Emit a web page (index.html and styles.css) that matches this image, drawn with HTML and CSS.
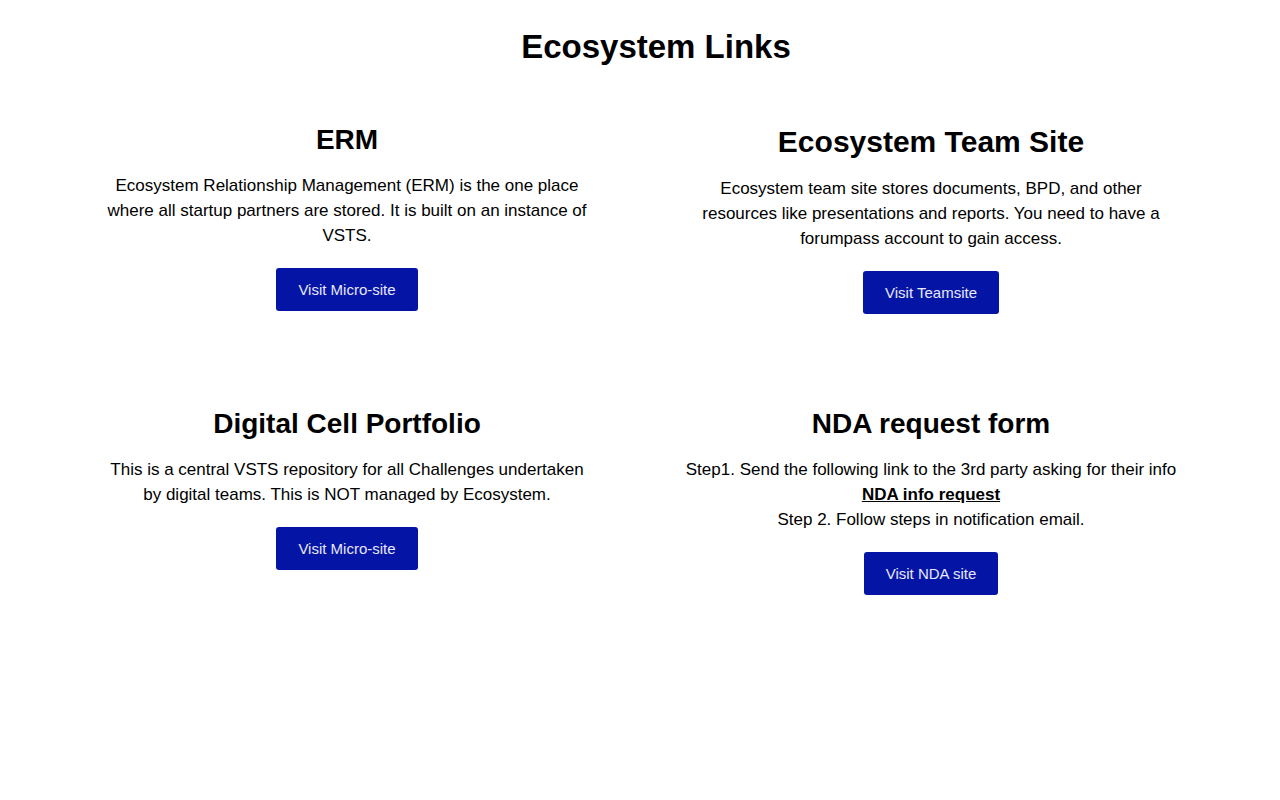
FILE: index.html
```html
<!DOCTYPE html>
<html lang="en">
<head>
  <meta charset="UTF-8">
  <title>Ecosystem Links</title>
  <meta name="viewport" content="width=device-width, initial-scale=1.0">
  <link rel="stylesheet" href="styles.css">
</head>
<body>
  <h1 class="page-title">Ecosystem Links</h1>

  <main class="links-grid">
    <section class="link-card">
      <h2>ERM</h2>
      <p>Ecosystem Relationship Management (ERM) is the one place where all startup partners are stored. It is built on an instance of VSTS.</p>
      <a class="visit-button" href="#">Visit Micro-site</a>
    </section>

    <section class="link-card">
      <h2 class="big-title">Ecosystem Team Site</h2>
      <p>Ecosystem team site stores documents, BPD, and other resources like presentations and reports. You need to have a forumpass account to gain access.</p>
      <a class="visit-button" href="#">Visit Teamsite</a>
    </section>

    <section class="link-card">
      <h2>Digital Cell Portfolio</h2>
      <p>This is a central VSTS repository for all Challenges undertaken by digital teams. This is NOT managed by Ecosystem.</p>
      <a class="visit-button" href="#">Visit Micro-site</a>
    </section>

    <section class="link-card">
      <h2>NDA request form</h2>
      <p>Step1. Send the following link to the 3rd party asking for their info<br>
        <a class="info-link" href="#">NDA info request</a><br>
        Step 2. Follow steps in notification email.</p>
      <a class="visit-button" href="#">Visit NDA site</a>
    </section>
  </main>
</body>
</html>
```

FILE: styles.css
```css
body {
  font-family: "Liberation Sans", Arial, sans-serif;
  background-color: #fff;
  color: #000;
  margin: 0;
  padding: 0;
}
.page-title {
  font-size: 33px;
  line-height: 42px;
  text-align: center;
  margin: 26px 0 0;
  padding-left: 32px;
}
.links-grid {
  display: grid;
  grid-template-columns: 1fr 1fr;
  row-gap: 92px;
  margin: 54px 57px 0 55px;
}
.link-card {
  display: flex;
  flex-direction: column;
  align-items: center;
  text-align: center;
  padding: 0 45px;
}
.link-card h2 {
  font-size: 28px;
  line-height: 36px;
  margin: 0;
}
.link-card h2.big-title {
  font-size: 30px;
  line-height: 39px;
}
.link-card p {
  font-size: 17px;
  line-height: 25px;
  margin: 15px 0 20px;
}
.info-link {
  color: #000;
  font-weight: bold;
}
.visit-button {
  display: block;
  background-color: #0414a4;
  color: #e8e8ff;
  text-decoration: none;
  font-size: 15px;
  line-height: 43px;
  padding: 0 22px;
  border-radius: 3px;
}
```
